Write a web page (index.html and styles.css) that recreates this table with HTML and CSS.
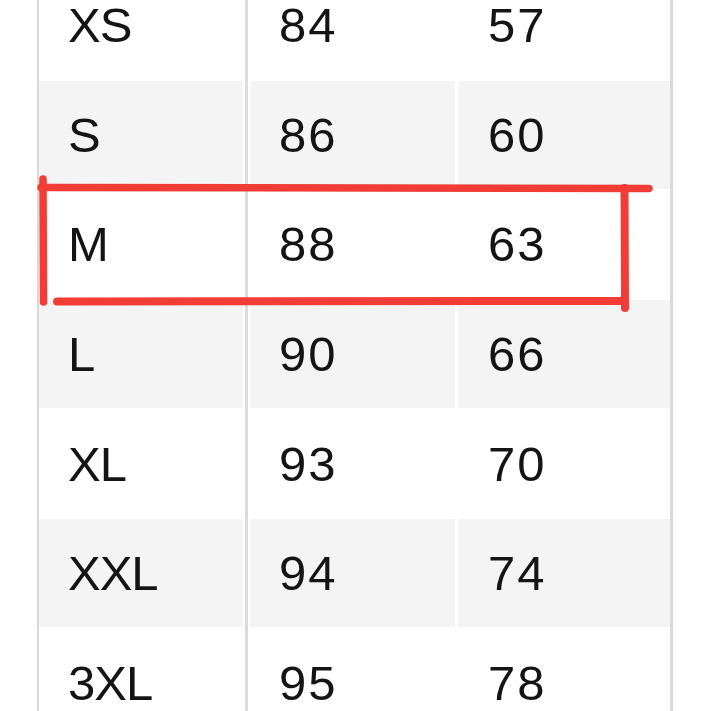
FILE: index.html
```html
<!DOCTYPE html>
<html lang="en">
<head>
<meta charset="utf-8">
<title>Size chart</title>
<link rel="stylesheet" href="styles.css">
</head>
<body>
<div class="page">
  <div class="table">
    <div class="row">
      <div class="cell c1">XS</div><div class="divider"></div><div class="cell c2">84</div><div class="gap"></div><div class="cell c3">57</div>
    </div>
    <div class="row alt">
      <div class="cell c1">S</div><div class="divider"></div><div class="cell c2">86</div><div class="gap"></div><div class="cell c3">60</div>
    </div>
    <div class="row">
      <div class="cell c1">M</div><div class="divider"></div><div class="cell c2">88</div><div class="gap"></div><div class="cell c3">63</div>
    </div>
    <div class="row alt">
      <div class="cell c1">L</div><div class="divider"></div><div class="cell c2">90</div><div class="gap"></div><div class="cell c3">66</div>
    </div>
    <div class="row">
      <div class="cell c1">XL</div><div class="divider"></div><div class="cell c2">93</div><div class="gap"></div><div class="cell c3">70</div>
    </div>
    <div class="row alt">
      <div class="cell c1">XXL</div><div class="divider"></div><div class="cell c2">94</div><div class="gap"></div><div class="cell c3">74</div>
    </div>
    <div class="row">
      <div class="cell c1">3XL</div><div class="divider"></div><div class="cell c2">95</div><div class="gap"></div><div class="cell c3">78</div>
    </div>
  </div>
  <svg class="mark" width="711" height="711" viewBox="0 0 711 711" xmlns="http://www.w3.org/2000/svg">
    <g fill="none" stroke="#f23d36" stroke-linecap="round">
      <path d="M41 187.5 L649 188.5" stroke-width="7.5"/>
      <path d="M43 179 L43.5 302" stroke-width="7.5"/>
      <path d="M57 301.5 L623 301" stroke-width="8"/>
      <path d="M624.5 188 L625 308" stroke-width="8"/>
    </g>
  </svg>
</div>
</body>
</html>
```

FILE: styles.css
```css
html, body {
  margin: 0;
  padding: 0;
  background: #ffffff;
  overflow: hidden;
}

.page {
  position: relative;
  width: 711px;
  height: 711px;
  overflow: hidden;
  background: #ffffff;
}

.table {
  margin-top: -29.6px;
  margin-left: 37px;
  width: 631px;
  border-left: 2px solid #d9d9d9;
  border-right: 3px solid #dadada;
  display: flex;
  flex-direction: column;
}

.row {
  display: flex;
  height: 109.6px;
  background: #ffffff;
}

.cell {
  display: flex;
  align-items: center;
  font-family: "Liberation Sans", Arial, sans-serif;
  font-size: 49px;
  line-height: 40px;
  color: #141414;
  box-sizing: border-box;
}

.row.alt .cell {
  background: #f4f4f4;
  margin: 1px 0;
}

.c1 {
  width: 204px;
  padding-left: 29px;
  letter-spacing: -1px;
}

.c2 {
  width: 205px;
  padding-left: 29px;
  letter-spacing: 2px;
}

.c3 {
  width: 212px;
  padding-left: 30px;
  letter-spacing: 2px;
}

.divider {
  width: 3px;
  margin: 0 2px;
  background: #dcdcdc;
}

.gap {
  width: 3px;
  background: #ffffff;
}

.mark {
  position: absolute;
  left: 0;
  top: 0;
  pointer-events: none;
}
```
